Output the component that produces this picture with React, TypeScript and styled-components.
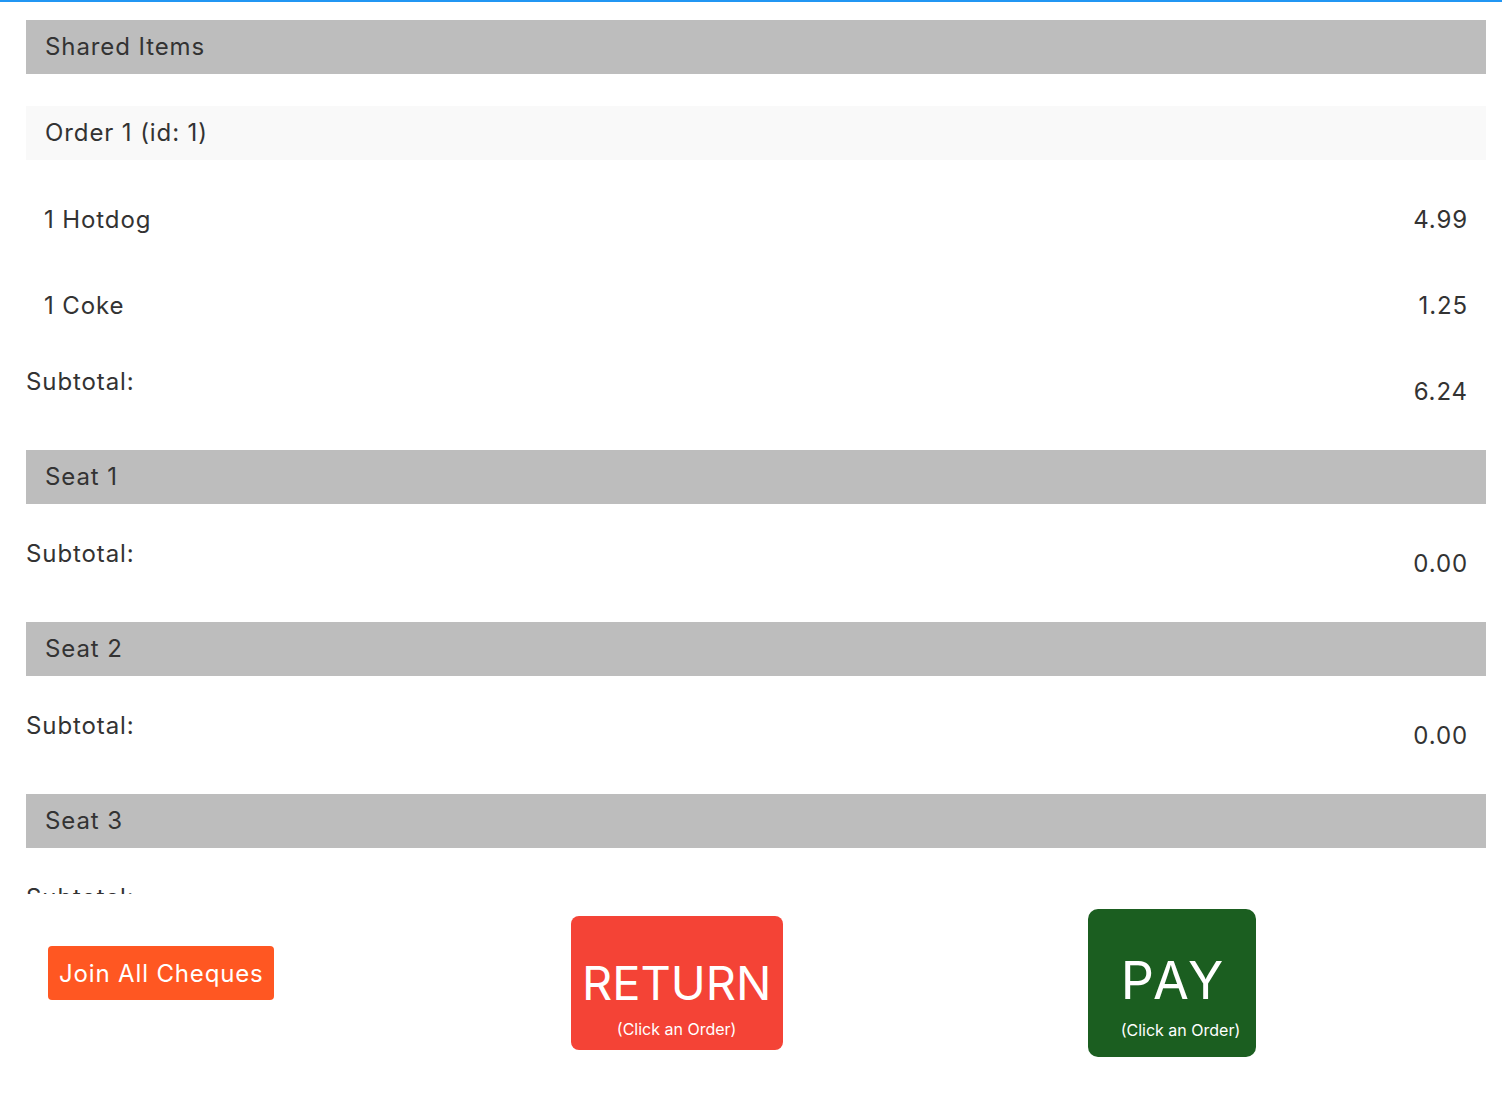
import React from "react";
import styled, { createGlobalStyle } from "styled-components";

const Global = createGlobalStyle`
  html, body { margin: 0; padding: 0; background: #fff; }
  body { font-family: Inter, "Noto Sans", "Liberation Sans", sans-serif; color: #333; }
  * { box-sizing: border-box; }
`;

const Page = styled.div`
  border-top: 2px solid #2196f3;
  width: 1502px;
  height: 1104px;
  display: flex;
  flex-direction: column;
  overflow: hidden;
`;

const ListArea = styled.div`
  height: 892px;
  overflow: hidden;
  padding: 18px 16px 0 26px;
  flex-shrink: 0;
  letter-spacing: 0.9px;
`;

const SectionHeader = styled.div`
  height: 54px;
  line-height: 54px;
  background: #bdbdbd;
  padding-left: 19px;
  font-size: 24px;
`;

const OrderBar = styled.div`
  margin-top: 32px;
  height: 54px;
  line-height: 54px;
  background: #f9f9f9;
  padding-left: 19px;
  font-size: 24px;
`;

const ItemRow = styled.div`
  display: flex;
  justify-content: space-between;
  padding: 45px 18px 11px 18px;
  font-size: 24px;
  line-height: 30px;
`;

const SubtotalRow = styled.div`
  display: flex;
  justify-content: space-between;
  align-items: flex-start;
  padding: 35px 18px 43px 0;
  font-size: 24px;
  line-height: 30px;
`;

const SubtotalValue = styled.span`
  margin-top: 10px;
`;

const ButtonBar = styled.div`
  display: flex;
  align-items: center;
  padding: 15px 0 0 48px;
`;

const JoinButton = styled.button`
  height: 54px;
  padding: 0 10px 0 11px;
  background: #ff5722;
  color: #fff;
  border: none;
  border-radius: 4px;
  font-family: inherit;
  font-size: 24px;
  letter-spacing: 0.85px;
  margin-bottom: 20px;
`;

const BigButton = styled.button<{ $bg: string; $w: number; $h: number; $left: number; $centered: boolean; $pt: number; $radius: number }>`
  display: flex;
  flex-direction: column;
  align-items: ${(p) => (p.$centered ? "center" : "flex-start")};
  width: ${(p) => p.$w}px;
  height: ${(p) => p.$h}px;
  margin-left: ${(p) => p.$left}px;
  padding: ${(p) => p.$pt}px 0 0 ${(p) => (p.$centered ? 0 : 33)}px;
  background: ${(p) => p.$bg};
  color: #fff;
  border: none;
  border-radius: ${(p) => p.$radius}px;
  font-family: inherit;
`;

const BigLabel = styled.span<{ $size: number; $ls: number }>`
  font-size: ${(p) => p.$size}px;
  line-height: ${(p) => p.$size + 8}px;
  letter-spacing: ${(p) => p.$ls}px;
`;

const SubLabel = styled.span`
  font-size: 16px;
  line-height: 20px;
  margin-top: 9px;
`;

type Item = { name: string; price: string };
type Section = { title: string; orders?: { title: string; items: Item[] }[]; subtotal: string };

const sections: Section[] = [
  {
    title: "Shared Items",
    orders: [
      {
        title: "Order 1 (id: 1)",
        items: [
          { name: "1 Hotdog", price: "4.99" },
          { name: "1 Coke", price: "1.25" },
        ],
      },
    ],
    subtotal: "6.24",
  },
  { title: "Seat 1", subtotal: "0.00" },
  { title: "Seat 2", subtotal: "0.00" },
  { title: "Seat 3", subtotal: "0.00" },
];

export default function App() {
  return (
    <>
      <Global />
      <Page>
        <ListArea>
          {sections.map((s) => (
            <div key={s.title}>
              <SectionHeader>{s.title}</SectionHeader>
              {s.orders?.map((o) => (
                <div key={o.title}>
                  <OrderBar>{o.title}</OrderBar>
                  {o.items.map((it) => (
                    <ItemRow key={it.name}>
                      <span>{it.name}</span>
                      <span>{it.price}</span>
                    </ItemRow>
                  ))}
                </div>
              ))}
              <SubtotalRow>
                <span>Subtotal:</span>
                <SubtotalValue>{s.subtotal}</SubtotalValue>
              </SubtotalRow>
            </div>
          ))}
        </ListArea>
        <ButtonBar>
          <JoinButton>Join All Cheques</JoinButton>
          <BigButton $bg="#f44336" $w={212} $h={134} $left={297} $centered={true} $pt={39} $radius={8}>
            <BigLabel $size={47} $ls={0}>RETURN</BigLabel>
            <SubLabel>(Click an Order)</SubLabel>
          </BigButton>
          <BigButton $bg="#1b5e20" $w={168} $h={148} $left={305} $centered={false} $pt={42} $radius={10}>
            <BigLabel $size={52} $ls={3}>PAY</BigLabel>
            <SubLabel>(Click an Order)</SubLabel>
          </BigButton>
        </ButtonBar>
      </Page>
    </>
  );
}
